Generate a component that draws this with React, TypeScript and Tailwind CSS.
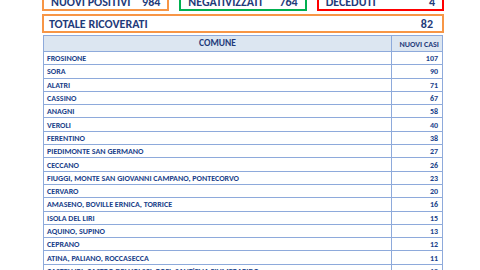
const rows: [string, number][] = [
  ["FROSINONE", 107],
  ["SORA", 90],
  ["ALATRI", 71],
  ["CASSINO", 67],
  ["ANAGNI", 58],
  ["VEROLI", 40],
  ["FERENTINO", 38],
  ["PIEDIMONTE SAN GERMANO", 27],
  ["CECCANO", 26],
  ["FIUGGI, MONTE SAN GIOVANNI CAMPANO, PONTECORVO", 23],
  ["CERVARO", 20],
  ["AMASENO, BOVILLE ERNICA, TORRICE", 16],
  ["ISOLA DEL LIRI", 15],
  ["AQUINO, SUPINO", 13],
  ["CEPRANO", 12],
  ["ATINA, PALIANO, ROCCASECCA", 11],
  ["CASTELLIRI, CASTRO DEI VOLSCI, POFI, SANT'ELIA FIUMERAPIDO", 10],
];

const font = {
  fontFamily: "Carlito, 'Liberation Sans Narrow', 'DejaVu Sans Condensed', 'Liberation Sans', sans-serif",
};

const App = () => {
  return (
    <div className="w-[480px] h-[270px] overflow-hidden bg-white text-[#1f3b7a] font-bold" style={font}>
      <div className="ml-[42px] w-[402px] mt-[-10px]">
        <div className="flex gap-[10px] h-[21px]">
          <div className="flex-1 border-2 border-[#f79646] flex items-end justify-between px-[7px] pb-[1px] text-[12px] leading-none">
            <span>NUOVI POSITIVI</span>
            <span>984</span>
          </div>
          <div className="flex-1 border-2 border-[#00b050] flex items-end justify-between px-[7px] pb-[1px] text-[12px] leading-none">
            <span>NEGATIVIZZATI</span>
            <span>764</span>
          </div>
          <div className="flex-1 border-2 border-[#ff0000] flex items-end justify-between px-[7px] pb-[1px] text-[12px] leading-none">
            <span>DECEDUTI</span>
            <span>4</span>
          </div>
        </div>
        <div className="mt-[3px] h-[19px] border-2 border-[#f79646] flex items-center justify-between px-[5px] text-[12px] leading-none">
          <span>TOTALE RICOVERATI</span>
          <span className="pr-[4px]">82</span>
        </div>
        <div className="mt-[2px] mx-[1px] border border-[#8eaadb]">
          <div className="flex h-[16px] bg-[#dce6f1] border-b border-[#8eaadb]">
            <div className="flex-1 flex items-center justify-center text-[9.5px]">COMUNE</div>
            <div className="w-[51px] border-l border-[#8eaadb] flex items-center justify-end pr-[3px] text-[8px] whitespace-nowrap">
              NUOVI CASI
            </div>
          </div>
          {rows.map(([name, n]) => (
            <div key={name} className="flex h-[13.3px] border-b border-[#8eaadb] text-[8px] leading-none text-[#203f8a]">
              <div className="flex-1 flex items-center pl-[3px] whitespace-nowrap overflow-hidden">{name}</div>
              <div className="w-[51px] border-l border-[#8eaadb] flex items-center justify-end pr-[4px]">{n}</div>
            </div>
          ))}
        </div>
      </div>
    </div>
  );
};

export default App;
